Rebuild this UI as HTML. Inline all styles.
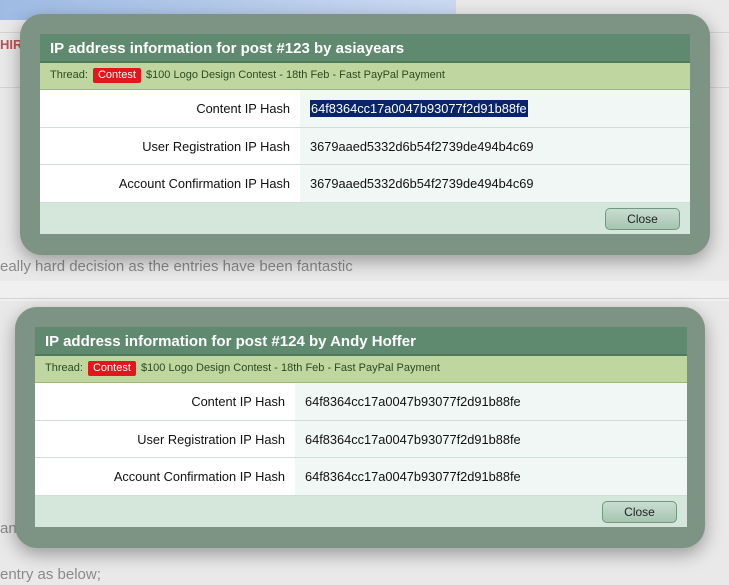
<!DOCTYPE html>
<html><head><meta charset="utf-8"><style>
*{margin:0;padding:0;box-sizing:border-box}
body{width:729px;height:585px;overflow:hidden;background:#e9e9e9;font-family:"Liberation Sans",sans-serif;position:relative}
.bg{position:absolute;color:#8a8a8a;font-size:15px;white-space:nowrap}
.line{position:absolute;left:0;right:0;height:1px;background:#d4d4d4}
.ov{position:absolute;border-radius:22px;background:#7d9383;box-shadow:0 6px 18px rgba(0,0,0,.35)}
.dlg{position:absolute;left:20px;top:20px;right:20px;height:200px;background:#fff}
.hd{height:29px;background:#5f8a70;color:#fff;font-weight:bold;font-size:15px;line-height:29px;padding-left:10px;border-bottom:2px solid #4e7a5e}
.th{height:27px;background:#bfd6a0;font-size:11px;line-height:25px;padding-left:10px;color:#2e4a1e;border-bottom:1px solid #9ab878}
.tag{display:inline-block;background:#e3161b;color:#fff;padding:0 5px;line-height:15px;border-radius:2px;margin:0 2px}
.row{display:flex;height:37.6px;border-bottom:1px solid #cfe0d6;font-size:12.8px;color:#111}
.row .l{width:260px;text-align:right;padding-right:10px;line-height:37px;background:#fff}
.row .v{flex:1;background:#f1f7f4;line-height:37px;padding-left:10px}
.ft{height:31px;background:#d5e6da;position:relative}
.btn{position:absolute;right:10px;top:5px;width:75px;height:22px;border:1px solid #6f9a80;border-radius:5px;background:linear-gradient(#c9ddd0,#a6c4b0);font-size:12px;text-align:center;line-height:20px;color:#222}
.sel{background:#0a246a;color:#fff;padding:1px 1px}
</style></head><body>
<div style="position:absolute;left:0;top:0;width:456px;height:20px;background:linear-gradient(90deg,#9fbbe4,#cbdaf2)"></div>
<div class="line" style="top:32px"></div>
<div class="bg" style="left:0;top:37px;color:#c05050;font-weight:bold;font-size:13px">HIRE,</div>
<div class="line" style="top:87px"></div>
<div class="bg" style="left:0;top:258px">eally hard decision as the entries have been fantastic</div>
<div style="position:absolute;left:0;top:281px;width:729px;height:20px;background:#f0f0f0"></div>
<div class="line" style="top:298px"></div>
<div class="bg" style="left:0;top:520px">announce a winner! Congratulations <u>@Andy Hoffer</u>!</div>
<div class="bg" style="left:0;top:566px">entry as below;</div>

<div class="ov" style="left:20px;top:14px;width:690px;height:241px">
 <div class="dlg">
  <div class="hd">IP address information for post #123 by asiayears</div>
  <div class="th">Thread: <span class="tag">Contest</span> $100 Logo Design Contest - 18th Feb - Fast PayPal Payment</div>
  <div class="row"><div class="l">Content IP Hash</div><div class="v"><span class="sel">64f8364cc17a0047b93077f2d91b88fe</span></div></div>
  <div class="row"><div class="l">User Registration IP Hash</div><div class="v">3679aaed5332d6b54f2739de494b4c69</div></div>
  <div class="row"><div class="l">Account Confirmation IP Hash</div><div class="v">3679aaed5332d6b54f2739de494b4c69</div></div>
  <div class="ft"><div class="btn">Close</div></div>
 </div>
</div>

<div class="ov" style="left:15px;top:307px;width:690px;height:241px">
 <div class="dlg" style="right:18px">
  <div class="hd">IP address information for post #124 by Andy Hoffer</div>
  <div class="th">Thread: <span class="tag">Contest</span> $100 Logo Design Contest - 18th Feb - Fast PayPal Payment</div>
  <div class="row"><div class="l">Content IP Hash</div><div class="v">64f8364cc17a0047b93077f2d91b88fe</div></div>
  <div class="row"><div class="l">User Registration IP Hash</div><div class="v">64f8364cc17a0047b93077f2d91b88fe</div></div>
  <div class="row"><div class="l">Account Confirmation IP Hash</div><div class="v">64f8364cc17a0047b93077f2d91b88fe</div></div>
  <div class="ft"><div class="btn">Close</div></div>
 </div>
</div>
</body></html>
